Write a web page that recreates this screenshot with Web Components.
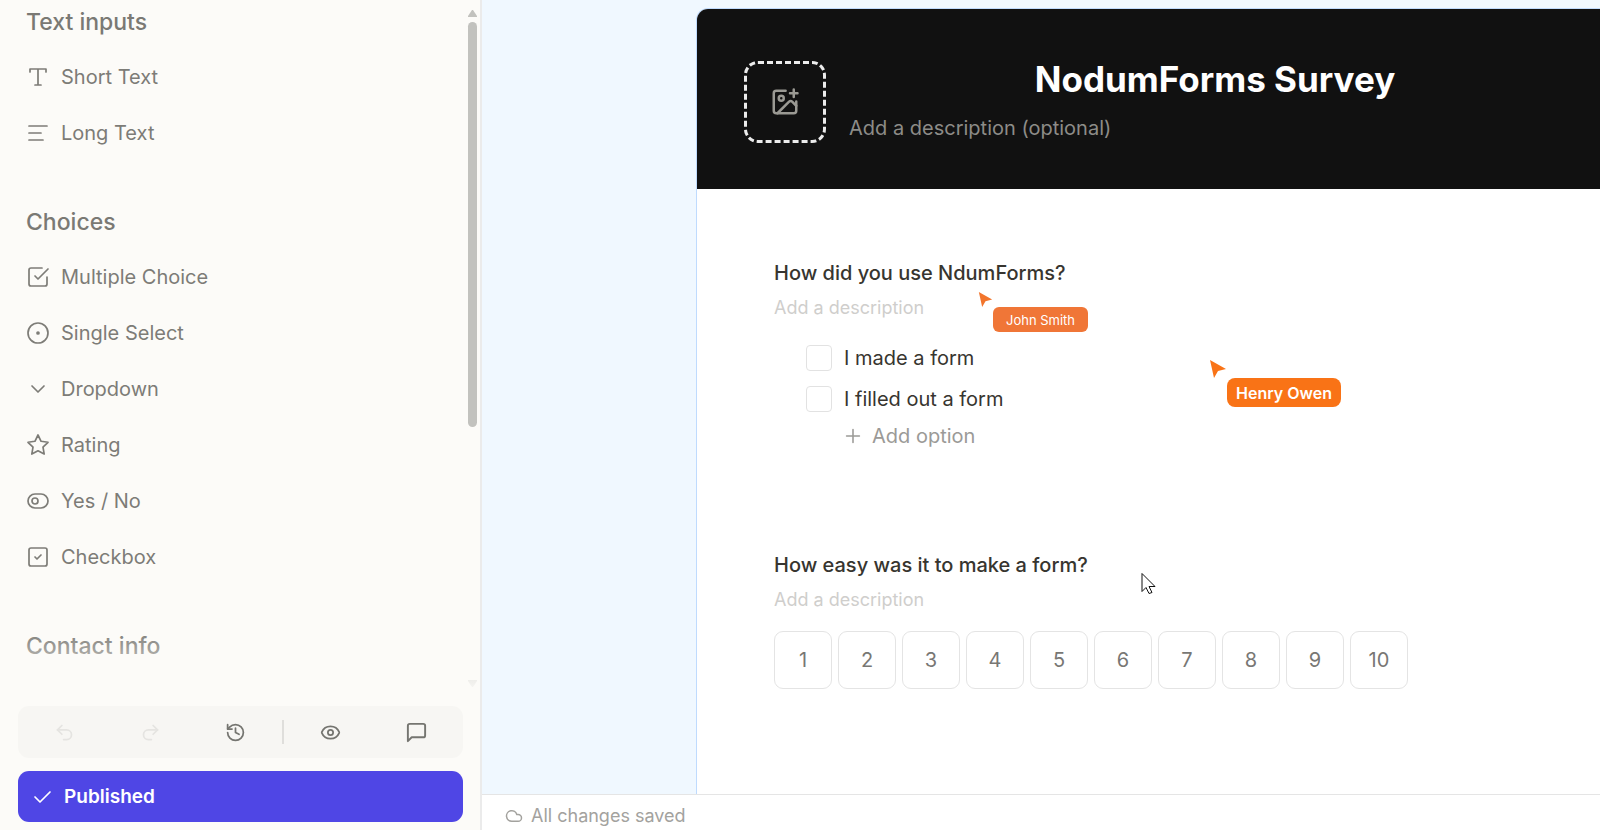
<!DOCTYPE html>
<html lang="en">
<head>
<meta charset="utf-8">
<title>NodumForms Survey</title>
<style>
html, body {
  height: 100%;
  margin: 0;
}
body {
  font-family: Inter, "Liberation Sans", sans-serif;
  overflow: hidden;
}
</style>
</head>
<body>
<nf-app>
  <nf-sidebar slot="sidebar">
    <nf-group label="Text inputs">
      <nf-field icon="type">Short Text</nf-field>
      <nf-field icon="lines">Long Text</nf-field>
    </nf-group>
    <nf-group label="Choices">
      <nf-field icon="check-square">Multiple Choice</nf-field>
      <nf-field icon="circle-dot">Single Select</nf-field>
      <nf-field icon="chevron">Dropdown</nf-field>
      <nf-field icon="star">Rating</nf-field>
      <nf-field icon="toggle">Yes / No</nf-field>
      <nf-field icon="checkbox">Checkbox</nf-field>
    </nf-group>
    <nf-group label="Contact info"></nf-group>
    <nf-toolbar slot="footer"></nf-toolbar>
    <nf-publish slot="footer">Published</nf-publish>
  </nf-sidebar>

  <nf-form heading="NodumForms Survey">
    <nf-question label="How did you use NdumForms?">
      <nf-options>
        <nf-option>I made a form</nf-option>
        <nf-option>I filled out a form</nf-option>
      </nf-options>
    </nf-question>
    <nf-question label="How easy was it to make a form?">
      <nf-scale max="10"></nf-scale>
    </nf-question>
  </nf-form>

  <nf-cursor slot="cursors" small style="--x: 496px; --y: 291px">John Smith</nf-cursor>
  <nf-cursor slot="cursors" style="--x: 727px; --y: 359px">Henry Owen</nf-cursor>
  <nf-pointer slot="cursors"></nf-pointer>
  <nf-status slot="status">All changes saved</nf-status>
</nf-app>

<script>
const ICONS = {
  'type': '<path d="M4 7V4h16v3M9 20h6M12 4v16"/>',
  'lines': '<path d="M3 5h18M3 12h12M3 19h14"/>',
  'check-square': '<path d="m9 11 3 3L22 4"/><path d="M21 12v7a2 2 0 0 1-2 2H5a2 2 0 0 1-2-2V5a2 2 0 0 1 2-2h11"/>',
  'circle-dot': '<circle cx="12" cy="12" r="10"/><circle cx="12" cy="12" r="1" fill="currentColor"/>',
  'chevron': '<path d="m6 9 6 6 6-6"/>',
  'star': '<path d="m12 2 3.09 6.26L22 9.27l-5 4.87 1.18 6.88L12 17.77l-6.18 3.25L7 14.14 2 9.27l6.91-1.01z"/>',
  'toggle': '<rect x="2" y="5" width="20" height="14" rx="7"/><circle cx="9" cy="12" r="3"/>',
  'checkbox': '<rect x="3" y="3" width="18" height="18" rx="2"/><path d="m9 12 2 2 4-4"/>',
  'undo': '<path d="M9 14 4 9l5-5"/><path d="M4 9h10.5a5.5 5.5 0 0 1 0 11H11"/>',
  'redo': '<path d="m15 14 5-5-5-5"/><path d="M20 9H9.5a5.5 5.5 0 0 0 0 11H13"/>',
  'history': '<path d="M3 12a9 9 0 1 0 9-9 9.75 9.75 0 0 0-6.74 2.74L3 8"/><path d="M3 3v5h5"/><path d="M12 7v5l4 2"/>',
  'eye': '<path d="M2.062 12.348a1 1 0 0 1 0-.696 10.750 10.750 0 0 1 19.876 0 1 1 0 0 1 0 .696 10.750 10.750 0 0 1-19.876 0"/><circle cx="12" cy="12" r="3"/>',
  'message': '<path d="M21 15a2 2 0 0 1-2 2H7l-4 4V5a2 2 0 0 1 2-2h14a2 2 0 0 1 2 2z"/>',
  'check': '<path d="m5 12 5 5L20 7"/>',
  'image-plus': '<path d="M16 5h6M19 2v6"/><path d="M21 11.500V19a2 2 0 0 1-2 2H5a2 2 0 0 1-2-2V5a2 2 0 0 1 2-2h7.500"/><path d="m21 15-3.086-3.086a2 2 0 0 0-2.828 0L6 21"/><circle cx="9" cy="9" r="2"/>',
  'plus': '<path d="M5 12h14M12 5v14"/>',
  'cloud': '<path d="M17.500 19H9a7 7 0 1 1 6.710-9h1.790a4.500 4.500 0 1 1 0 9z"/>',
};

/** Attaches an open shadow root with the given styles and markup. */
class NfElement extends HTMLElement {
  constructor() {
    super();
    const root = this.attachShadow({mode: 'open'});
    root.innerHTML = `<style>
* { box-sizing: border-box; }
button, input { font: inherit; }
${this.styles}
</style>${this.markup}`;
  }
  get styles() { return ''; }
  get markup() { return '<slot></slot>'; }
  attr(name) { return this.getAttribute(name) || ''; }
}

/**
 * Line icon. Attribute "name" picks the drawing; "--size" and "--stroke" control its look.
 */
class NfIcon extends NfElement {
  get styles() { return `
:host { display: inline-flex; flex: none; }
svg {
  width: var(--size, 24px);
  height: var(--size, 24px);
  fill: none;
  stroke: currentColor;
  stroke-width: var(--stroke, 1.7);
  stroke-linecap: round;
  stroke-linejoin: round;
}`; }
  get markup() {
    return `<svg viewBox="0 0 24 24" aria-hidden="true">${ICONS[this.attr('name')]}</svg>`;
  }
}

class NfApp extends NfElement {
  get styles() { return `
:host {
  display: grid;
  grid-template-columns: 482px 1fr;
  height: 100vh;
}
main {
  position: relative;
  display: flex;
  flex-direction: column;
  min-width: 0;
  min-height: 0;
}
.canvas {
  flex: 1;
  min-height: 0;
  display: flex;
  padding: 8px 0 0 214px;
  background: #f0f8ff;
  overflow: hidden;
}`; }
  get markup() { return `
<slot name="sidebar"></slot>
<main>
  <div class="canvas"><slot></slot></div>
  <slot name="status"></slot>
  <slot name="cursors"></slot>
</main>`; }
}

class NfSidebar extends NfElement {
  get styles() { return `
:host {
  display: flex;
  flex-direction: column;
  min-height: 0;
  background: #fcfbf8;
  border-right: 2px solid #ebebeb;
  color: #7d7c77;
}
.list {
  position: relative;
  flex: 1;
  min-height: 0;
  display: flex;
  overflow: hidden;
}
.list::after {
  content: "";
  position: absolute;
  inset: auto 0 0 0;
  height: 60px;
  background: linear-gradient(to bottom, #fcfbf800, #fcfbf8e6);
}
.fields {
  flex: 1;
  padding: 6px 26px;
}
.scroll {
  display: flex;
  flex-direction: column;
  align-items: center;
  justify-content: space-between;
  width: 9px;
  margin: 10px 3px 2px 0;
  color: #c2c2be;
}
.scroll svg { width: 9px; height: 7px; fill: currentColor; }
.thumb {
  flex: 1;
  width: 9px;
  margin: 5px 0;
}
.thumb i {
  display: block;
  height: 62%;
  border-radius: 5px;
  background: currentColor;
}
footer {
  display: flex;
  flex-direction: column;
  gap: 13px;
  padding: 17px 17px 8px 18px;
}`; }
  get markup() { return `
<div class="list">
  <div class="fields"><slot></slot></div>
  <div class="scroll">
    <svg viewBox="0 0 9 7"><path d="M4 0h1l4 6v1H0V6z"/></svg>
    <div class="thumb"><i></i></div>
    <svg viewBox="0 0 9 7"><path d="M4 7h1l4-6V0H0v1z"/></svg>
  </div>
</div>
<footer><slot name="footer"></slot></footer>`; }
}

class NfGroup extends NfElement {
  get styles() { return `
:host { display: block; margin-bottom: 45px; }
h2 {
  margin: 0 0 11px;
  font-size: 23px;
  font-weight: 500;
  line-height: 32px;
  color: #7a7974;
}`; }
  get markup() { return `<h2>${this.attr('label')}</h2><slot></slot>`; }
}

class NfField extends NfElement {
  get styles() { return `
:host { display: block; }
button {
  display: flex;
  align-items: center;
  gap: 11px;
  width: 100%;
  height: 56px;
  padding: 0;
  border: 0;
  background: none;
  color: inherit;
  font-size: 20px;
  cursor: pointer;
}`; }
  get markup() { return `
<button type="button"><nf-icon name="${this.attr('icon')}"></nf-icon><slot></slot></button>`; }
}

class NfToolbar extends NfElement {
  get styles() { return `
:host {
  display: flex;
  align-items: center;
  height: 52px;
  padding: 0 4px;
  border-radius: 11px;
  background: #f7f6f3;
}
button {
  flex: 1;
  display: flex;
  justify-content: center;
  padding: 0;
  border: 0;
  background: none;
  color: #757570;
  --size: 21px;
  --stroke: 2;
}
button:disabled { color: #e5e4e1; }
button.large { --size: 23px; }
hr {
  width: 2px;
  height: 24px;
  margin: 0 4px;
  border: 0;
  background: #dfdedb;
}`; }
  get markup() { return `
<button disabled aria-label="Undo"><nf-icon name="undo"></nf-icon></button>
<button disabled aria-label="Redo"><nf-icon name="redo"></nf-icon></button>
<button aria-label="History"><nf-icon name="history"></nf-icon></button>
<hr>
<button aria-label="Preview"><nf-icon name="eye"></nf-icon></button>
<button class="large" aria-label="Comments"><nf-icon name="message"></nf-icon></button>`; }
}

class NfPublish extends NfElement {
  get styles() { return `
:host { display: block; }
button {
  display: flex;
  align-items: center;
  gap: 10px;
  width: 100%;
  height: 51px;
  padding: 0 12px;
  border: 0;
  border-radius: 11px;
  background: #4f46e5;
  color: #fff;
  font-size: 19px;
  font-weight: 600;
}`; }
  get markup() { return `
<button type="button"><nf-icon name="check"></nf-icon><slot></slot></button>`; }
}

class NfForm extends NfElement {
  get styles() { return `
:host {
  flex: 1;
  min-width: 0;
  border: solid #bfdbfe;
  border-width: 1px 0 0 1px;
  border-radius: 12px 0 0 0;
  background: #fff;
  overflow: hidden;
}
header {
  display: flex;
  align-items: center;
  gap: 23px;
  height: 180px;
  padding: 5px 19px 0 47px;
  background: #111;
}
.logo {
  display: flex;
  align-items: center;
  justify-content: center;
  width: 82px;
  height: 82px;
  padding: 0;
  border: 3px dashed #ececec;
  border-radius: 14px;
  background: none;
  color: #9a9993;
  --size: 30px;
  --stroke: 2;
}
.text {
  flex: 1;
  min-width: 0;
  padding-bottom: 4px;
}
h1 {
  margin: 0 0 5px;
  color: #fff;
  font-size: 35px;
  font-weight: 700;
  line-height: 52px;
  text-align: center;
}
input {
  display: block;
  width: 100%;
  height: 36px;
  padding: 0;
  border: 0;
  outline: 0;
  background: none;
  font-size: 20px;
}
input::placeholder { color: #8d8c88; }
.body {
  display: flex;
  flex-direction: column;
  gap: 96px;
  padding: 68px 77px;
}`; }
  get markup() { return `
<header>
  <button class="logo" aria-label="Add logo"><nf-icon name="image-plus"></nf-icon></button>
  <div class="text">
    <h1>${this.attr('heading')}</h1>
    <input placeholder="Add a description (optional)" aria-label="Form description">
  </div>
</header>
<div class="body"><slot></slot></div>`; }
}

class NfQuestion extends NfElement {
  get styles() { return `
:host { display: block; }
h2 {
  margin: 0;
  color: #37352f;
  font-size: 20px;
  font-weight: 500;
  line-height: 32px;
}
input {
  display: block;
  width: 100%;
  height: 32px;
  margin: 2px 0 0;
  padding: 0;
  border: 0;
  outline: 0;
  background: none;
  font-size: 18px;
}
input::placeholder { color: #cfcecc; }`; }
  get markup() { return `
<h2>${this.attr('label')}</h2>
<input placeholder="Add a description" aria-label="Question description">
<slot></slot>`; }
}

class NfOptions extends NfElement {
  get styles() { return `
:host { display: block; padding: 14px 32px 0; }
button {
  display: flex;
  align-items: center;
  gap: 8px;
  height: 34px;
  margin-left: 36px;
  padding: 0;
  border: 0;
  background: none;
  color: #9b9a97;
  font-size: 20px;
  --size: 22px;
}`; }
  get markup() { return `
<slot></slot>
<button type="button"><nf-icon name="plus"></nf-icon>Add option</button>`; }
}

class NfOption extends NfElement {
  get styles() { return `
:host { display: block; }
label {
  display: flex;
  align-items: center;
  gap: 12px;
  height: 41px;
  color: #37352f;
  font-size: 20px;
}
input {
  appearance: none;
  width: 26px;
  height: 26px;
  margin: 0;
  border: 1px solid #e2e2e2;
  border-radius: 4px;
  background: #fff;
}`; }
  get markup() { return '<label><input type="checkbox"><slot></slot></label>'; }
}

class NfScale extends NfElement {
  get styles() { return `
:host { display: flex; gap: 6px; padding-top: 16px; }
button {
  width: 58px;
  height: 58px;
  padding: 0;
  border: 1px solid #e4e4e4;
  border-radius: 9px;
  background: #fff;
  color: #787774;
  font-size: 20px;
}`; }
  get markup() {
    let out = '';
    for (let i = 1; i <= Number(this.attr('max')); i++) {
      out += `<button type="button">${i}</button>`;
    }
    return out;
  }
}

class NfStatus extends NfElement {
  get styles() { return `
:host {
  display: flex;
  align-items: center;
  gap: 8px;
  height: 36px;
  padding: 6px 23px 0;
  border-top: 1px solid #e5e5e5;
  background: #fff;
  box-sizing: border-box;
  color: #a3a29e;
  font-size: 18px;
  --size: 18px;
  --stroke: 2;
}`; }
  get markup() { return '<nf-icon name="cloud"></nf-icon><slot></slot>'; }
}

/** Cursor of a collaborator, with a name tag. Placed by "--x" and "--y". */
class NfCursor extends NfElement {
  get styles() { return `
:host {
  position: absolute;
  left: var(--x);
  top: var(--y);
  color: #fff;
}
svg { display: block; width: 18px; height: 20px; fill: #f97316; }
span {
  display: block;
  height: 29px;
  margin: -1px 0 0 18px;
  padding: 0 9px;
  border-radius: 8px;
  background: #f97316;
  font-size: 16px;
  font-weight: 600;
  line-height: 30px;
}
:host([small]) svg { width: 15px; height: 17px; fill: #f2752c; }
:host([small]) span {
  height: 25px;
  margin: -1px 0 0 15px;
  padding: 0 13px;
  border-radius: 6px;
  background: #f07637;
  font-size: 13px;
  font-weight: 400;
  line-height: 27px;
}`; }
  get markup() { return `
<svg viewBox="0 0 18 20"><path d="M1 1l16 9-8 2-4 7z"/></svg>
<span><slot></slot></span>`; }
}

class NfPointer extends NfElement {
  get styles() { return `
:host {
  position: absolute;
  left: 659px;
  top: 572px;
}
svg { display: block; width: 15px; height: 23px; }`; }
  get markup() { return `
<svg viewBox="0 0 15 23"><path d="M1 1.500v18l4-4 3 6 3-1-3-6h6z" fill="#fff" stroke="#111"/></svg>`; }
}

customElements.define('nf-icon', NfIcon);
customElements.define('nf-app', NfApp);
customElements.define('nf-sidebar', NfSidebar);
customElements.define('nf-group', NfGroup);
customElements.define('nf-field', NfField);
customElements.define('nf-toolbar', NfToolbar);
customElements.define('nf-publish', NfPublish);
customElements.define('nf-form', NfForm);
customElements.define('nf-question', NfQuestion);
customElements.define('nf-options', NfOptions);
customElements.define('nf-option', NfOption);
customElements.define('nf-scale', NfScale);
customElements.define('nf-status', NfStatus);
customElements.define('nf-cursor', NfCursor);
customElements.define('nf-pointer', NfPointer);
</script>
</body>
</html>
